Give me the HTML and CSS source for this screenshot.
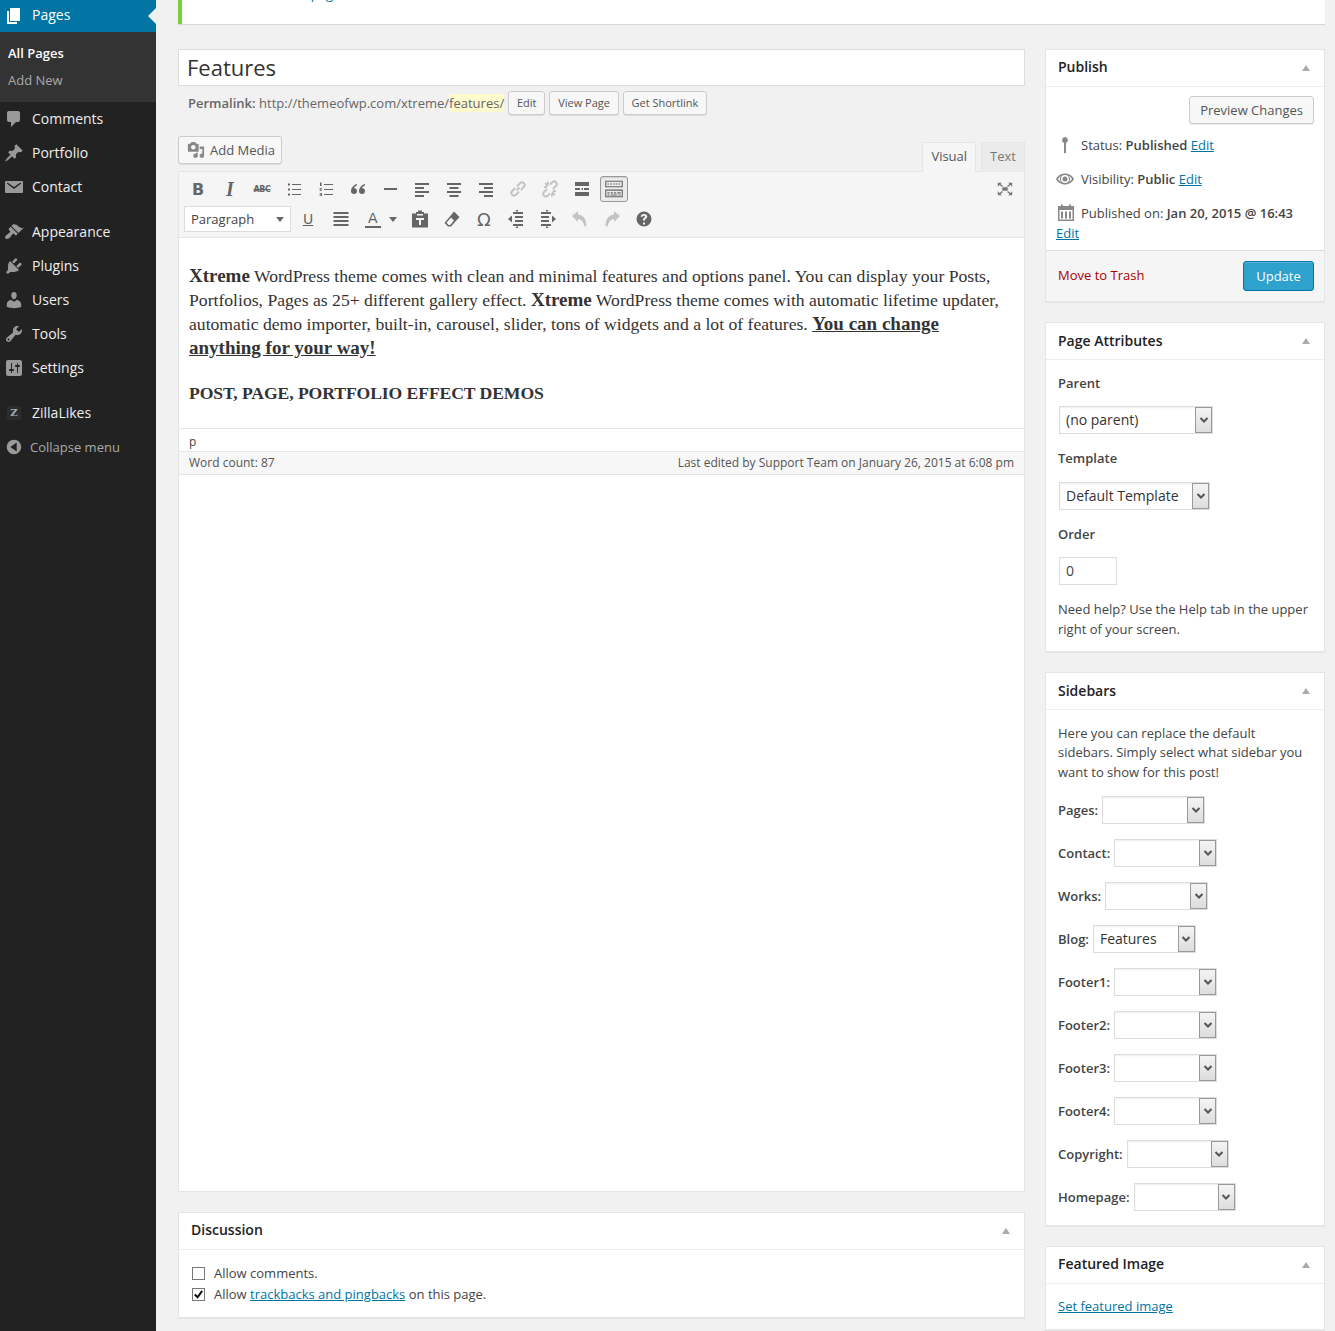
FILE: index.html
```html
<!DOCTYPE html>
<html lang="en">
<head>
<meta charset="utf-8">
<title>Edit Page</title>
<link rel="stylesheet" href="styles.css">
</head>
<body>
<svg class="defs" width="0" height="0" aria-hidden="true">
  <defs>
    <symbol id="i-page" viewBox="0 0 20 20"><path d="M6 15V2h10v13H6zm-1 1h8v2H3V5h2v11z"/></symbol>
    <symbol id="i-comment" viewBox="0 0 20 20"><path d="M5 2h9c1.1 0 2 .9 2 2v7c0 1.1-.9 2-2 2h-2l-5 5v-5H5c-1.1 0-2-.9-2-2V4c0-1.1.9-2 2-2z"/></symbol>
    <symbol id="i-pin" viewBox="0 0 20 20"><path d="M10.44 3.02l1.82-1.82 6.36 6.35-1.83 1.82c-1.05-.68-2.48-.57-3.41.36l-.75.75c-.92.93-1.04 2.35-.35 3.41l-1.83 1.82-2.41-2.41-2.8 2.79c-.42.42-3.38 2.71-3.8 2.29s1.86-3.39 2.28-3.81l2.79-2.79L4.1 9.36l1.83-1.82c1.05.69 2.48.57 3.4-.36l.75-.75c.93-.92 1.05-2.35.36-3.41z"/></symbol>
    <symbol id="i-mail" viewBox="0 0 20 20"><path fill-rule="evenodd" d="M2 4h16a1 1 0 0 1 1 1v10a1 1 0 0 1-1 1H2a1 1 0 0 1-1-1V5a1 1 0 0 1 1-1zM3.500 5.500L2.800 6.500 10 12l7.200-5.500-.7-1L10 10z"/></symbol>
    <symbol id="i-brush" viewBox="0 0 20 20"><path d="M14.48 11.06L7.41 3.99l1.5-1.5c.5-.56 2.3-.47 3.51.32 1.21.8 1.43 1.28 2.91 2.1 1.18.64 2.45 1.26 4.45.85zm-.71.71L6.7 4.7 4.93 6.47c-.39.39-.39 1.02 0 1.41l1.06 1.06c.39.39.39 1.03 0 1.42-.6.6-1.43 1.11-2.21 1.69-.35.26-.7.53-1.01.84C1.43 13.23.4 15.45 1.5 16.55c1.1 1.1 3.32.07 4.64-1.27.31-.31.58-.66.84-1.01.58-.78 1.09-1.61 1.69-2.21.39-.39 1.02-.39 1.42 0l1.06 1.06c.39.39 1.02.39 1.41 0z"/></symbol>
    <symbol id="i-plug" viewBox="0 0 20 20"><path d="M13.11 4.36L9.87 7.6 8 5.73l3.24-3.24c.35-.34 1.05-.2 1.56.32.52.51.66 1.21.31 1.55zm-8 1.77l.91-1.12 9.01 9.01-1.19.84c-.71.71-2.63 1.16-3.82 1.16H6.14L4.9 17.26c-.59.59-1.54.59-2.12 0-.59-.58-.59-1.53 0-2.12l1.24-1.24v-3.88c0-1.13.4-3.19 1.09-3.89zm7.26 3.97l3.24-3.24c.34-.35 1.04-.21 1.55.31.52.51.66 1.21.31 1.55l-3.24 3.25z"/></symbol>
    <symbol id="i-user" viewBox="0 0 20 20"><path d="M10 9.25c-2.27 0-2.73-3.44-2.73-3.44C7 4.02 7.82 2 9.97 2c2.16 0 2.98 2.02 2.71 3.81 0 0-.41 3.44-2.68 3.44zm0 2.57L12.72 10c2.39 0 4.52 2.33 4.52 4.53v2.49s-3.65 1.13-7.24 1.13c-3.65 0-7.24-1.13-7.24-1.13v-2.49c0-2.25 1.94-4.48 4.47-4.48z"/></symbol>
    <symbol id="i-tool" viewBox="0 0 20 20"><path d="M16.68 9.77c-1.34 1.34-3.3 1.67-4.95.99l-5.41 6.52c-.99.99-2.59.99-3.58 0s-.99-2.59 0-3.57l6.52-5.42c-.68-1.65-.35-3.61.99-4.95 1.28-1.28 3.12-1.62 4.72-1.06l-2.89 2.89 2.82 2.82 2.86-2.87c.53 1.58.18 3.39-1.08 4.65zM3.81 16.21c.4.39 1.04.39 1.43 0 .4-.4.4-1.04 0-1.43-.39-.4-1.03-.4-1.43 0-.39.39-.39 1.03 0 1.43z"/></symbol>
    <symbol id="i-settings" viewBox="0 0 20 20"><path d="M18 16V4c0-1.1-.9-2-2-2H4c-1.1 0-2 .9-2 2v12c0 1.1.9 2 2 2h12c1.1 0 2-.9 2-2zM8 11h1c.55 0 1 .45 1 1s-.45 1-1 1H8v1.5c0 .28-.22.5-.5.5s-.5-.22-.5-.5V13H6c-.55 0-1-.45-1-1s.45-1 1-1h1V5.5c0-.28.22-.5.5-.5s.5.22.5.5V11zm5-2h-1c-.55 0-1-.45-1-1s.45-1 1-1h1V5.5c0-.28.22-.5.5-.5s.5.22.5.5V7h1c.55 0 1 .45 1 1s-.45 1-1 1h-1v5.5c0 .28-.22.5-.5.5s-.5-.22-.5-.5V9z"/></symbol>
    <symbol id="i-collapse" viewBox="0 0 20 20"><path d="M18 10c0 4.4-3.6 8-8 8s-8-3.6-8-8 3.6-8 8-8 8 3.6 8 8zm-5-5l-7 5 7 5V5z"/></symbol>
    <symbol id="i-media" viewBox="0 0 20 20"><path d="M13 11V4c0-.55-.45-1-1-1h-1.67L9 1H5L3.67 3H2c-.55 0-1 .45-1 1v7c0 .55.45 1 1 1h10c.55 0 1-.45 1-1zM7 4.5c1.38 0 2.5 1.12 2.5 2.5S8.38 9.5 7 9.5 4.5 8.38 4.5 7 5.62 4.5 7 4.5zM14 6h5v10.5c0 1.38-1.12 2.5-2.5 2.5S14 17.88 14 16.5s1.12-2.5 2.5-2.5c.17 0 .34.02.5.05V9h-3V6zm-4 8.05V13h2v3.5c0 1.38-1.12 2.5-2.5 2.5S7 17.88 7 16.5 8.12 14 9.5 14c.17 0 .34.02.5.05z"/></symbol>
    <symbol id="i-chev" viewBox="0 0 10 10"><path d="M1.5 3 L5 6.5 L8.5 3" fill="none" stroke="currentColor" stroke-width="2"/></symbol>
  </defs>
</svg>
<div class="shell">
  <nav class="sidebar">
    <a class="menu-item current"><svg class="menu-icon"><use href="#i-page"/></svg><span>Pages</span></a>
    <div class="submenu">
      <a class="sub-item sub-on">All Pages</a>
      <a class="sub-item">Add New</a>
    </div>
    <a class="menu-item"><svg class="menu-icon"><use href="#i-comment"/></svg><span>Comments</span></a>
    <a class="menu-item"><svg class="menu-icon"><use href="#i-pin"/></svg><span>Portfolio</span></a>
    <a class="menu-item"><svg class="menu-icon"><use href="#i-mail"/></svg><span>Contact</span></a>
    <div class="menu-sep"></div>
    <a class="menu-item"><svg class="menu-icon"><use href="#i-brush"/></svg><span>Appearance</span></a>
    <a class="menu-item"><svg class="menu-icon"><use href="#i-plug"/></svg><span>Plugins</span></a>
    <a class="menu-item"><svg class="menu-icon"><use href="#i-user"/></svg><span>Users</span></a>
    <a class="menu-item"><svg class="menu-icon"><use href="#i-tool"/></svg><span>Tools</span></a>
    <a class="menu-item"><svg class="menu-icon"><use href="#i-settings"/></svg><span>Settings</span></a>
    <div class="menu-sep"></div>
    <a class="menu-item"><span class="zilla">Z</span><span>ZillaLikes</span></a>
    <a class="menu-item collapse"><svg class="collapse-icon"><use href="#i-collapse"/></svg><span>Collapse menu</span></a>
  </nav>

  <main class="content">
    <div class="notice"><p class="notice-text"><a class="link-plain">View page</a></p></div>
    <div class="columns">
      <section class="col-main">
        <div class="title-box">Features</div>
        <div class="permalink">
          <strong class="perm-label">Permalink:</strong>
          <span>http://themeofwp.com/xtreme/<mark class="slug">features/</mark></span>
          <button class="mini-btn">Edit</button>
          <button class="mini-btn">View Page</button>
          <button class="mini-btn">Get Shortlink</button>
        </div>

        <div class="media-row">
          <button class="media-btn"><svg class="media-icon"><use href="#i-media"/></svg>Add Media</button>
          <div class="tabs">
            <span class="tab tab-on">Visual</span>
            <span class="tab">Text</span>
          </div>
        </div>

        <div class="editor">
          <div class="toolbar">
            <div class="tb-row">
              <span class="tb t-b">B</span>
              <span class="tb t-i">I</span>
              <span class="tb t-abc">ABC</span>
              <span class="tb"><svg class="ic" viewBox="0 0 20 20"><path d="M4 4.500h2v2H4zM8 5h9v1H8zM4 9.500h2v2H4zM8 10h9v1H8zM4 14.500h2v2H4zM8 15h9v1H8z"/></svg></span>
              <span class="tb"><svg class="ic" viewBox="0 0 20 20"><path d="M8 5h9v1H8zM8 10h9v1H8zM8 15h9v1H8zM4 3.500h1.500v3.500H4zM3.500 9h2.500v.8L4.500 11H6v.8H3.500V11L5 9.800H3.500zM3.500 14H6v3H3.500v-.8H5v-.4H4v-.6h1v-.4H3.500z"/></svg></span>
              <span class="tb"><svg class="ic" viewBox="0 0 20 20"><path d="M9 5c-3 .8-5.500 3-6 6.500-.3 2 1 3.500 3 3.500s3-1.300 3-3-1.200-2.800-3-3c.3-1 1.500-2 3-2.500zM17 5c-3 .8-5.500 3-6 6.500-.3 2 1 3.500 3 3.500s3-1.300 3-3-1.200-2.800-3-3c.3-1 1.500-2 3-2.500z"/></svg></span>
              <span class="tb"><svg class="ic" viewBox="0 0 20 20"><path d="M4 9h13v2H4z"/></svg></span>
              <span class="tb"><svg class="ic" viewBox="0 0 20 20"><path d="M3 4h14v2H3zM3 8h9v2H3zM3 12h14v2H3zM3 16h9v2H3z"/></svg></span>
              <span class="tb"><svg class="ic" viewBox="0 0 20 20"><path d="M3 4h14v2H3zM5.500 8h9v2h-9zM3 12h14v2H3zM5.500 16h9v2h-9z"/></svg></span>
              <span class="tb"><svg class="ic" viewBox="0 0 20 20"><path d="M3 4h14v2H3zM8 8h9v2H8zM3 12h14v2H3zM8 16h9v2H8z"/></svg></span>
              <span class="tb off"><svg class="ic" viewBox="0 0 20 20"><path d="M8.500 11.500l3-3M7.200 9L4 12.200a2.700 2.700 0 0 0 3.800 3.800l3.200-3.200M9 7.200L12.200 4a2.700 2.700 0 0 1 3.800 3.800L12.800 11" fill="none" stroke="currentColor" stroke-width="2"/></svg></span>
              <span class="tb off"><svg class="ic" viewBox="0 0 20 20"><path d="M7.200 10L4 13a2.600 2.600 0 0 0 3.700 3.700l2.300-2.300M12.800 10L16 7a2.600 2.600 0 0 0-3.700-3.700L10 5.600M5 4l3 3M15 16l-3-3M4 8h3M13 12h3M8 2.500v3M12 14.500v3" fill="none" stroke="currentColor" stroke-width="2"/></svg></span>
              <span class="tb"><svg class="ic" viewBox="0 0 20 20"><path d="M3 3h14v4H3zM3 9h5v2H3zM9.500 9h1.500v2H9.500zM12 9h5v2h-5zM3 13h14v4H3z"/></svg></span>
              <span class="tb tb-active"><svg class="ic-wide" viewBox="0 0 20 20"><path d="M2 2.500h16v6H2zM3 3.500v4h14v-4zM4 5h1.500v1H4zM6.500 5H8v1H6.500zM9 5h1.500v1H9zM11.500 5H13v1h-1.500zM14 5h1.500v1H14zM2 10.500h16v7H2zM3 11.500v5h14v-5zM4 13h2v1H4zM7 13h2v1H7zM10 13h2v1h-2zM13 13h3v1h-3zM4 15h2v1H4zM7 15h6v1H7zM14 15h2v1h-2z" fill-rule="evenodd"/></svg></span>
              <span class="tb tb-end"><svg class="ic" viewBox="0 0 20 20"><path d="M7 8h6v4H7zM2 3h4.500L5 4.500l2.700 2.200-1 1.100L4 5.500 2 7.500zM18 3v4.500l-2-2-2.700 2.300-1-1.100L15 4.500 13.500 3zM2 17v-4.500l2 2 2.700-2.300 1 1.100L5 15.500 6.500 17zM18 17h-4.500l1.500-1.500-2.700-2.200 1-1.100 2.700 2.300 2-2z"/></svg></span>
            </div>
            <div class="tb-row tb-row2">
              <div class="format"><span>Paragraph</span><i class="caret"></i></div>
              <span class="tb t-u">U</span>
              <span class="tb tb-just"><svg class="ic" viewBox="0 0 20 20"><path d="M2.500 3h15v2h-15zM2.500 7h15v2h-15zM2.500 11h15v2h-15zM2.500 15h15v2h-15z"/></svg></span>
              <span class="tb tb-color"><span class="t-a">A</span><i class="caret caret-a"></i></span>
              <span class="tb"><svg class="ic" viewBox="0 0 20 20"><path d="M2 4.500h4V3h2V1.500h4V3h2v1.500h4V18.500H2zM7 5v1.500h6V5zM6 9v2h3v5h2v-5h3V9z" fill-rule="evenodd"/></svg></span>
              <span class="tb"><svg class="ic" viewBox="0 0 20 20"><path d="M12 2.500l5.500 5.500-8.500 9.500H6L2.500 14zM4.500 13.800l2.200 2.200h1.600L12 11.500l-3-3z" fill-rule="evenodd"/></svg></span>
              <span class="tb t-om">Ω</span>
              <span class="tb"><svg class="ic" viewBox="0 0 20 20"><path d="M7 3h10v2H7zM9 7h8v2H9zM9 11h8v2H9zM7 15h10v2H7zM10 17.500h2V19h-2zM10 1h2v1.500h-2zM2 10l4-3.500v7z"/></svg></span>
              <span class="tb"><svg class="ic" viewBox="0 0 20 20"><path d="M3 3h10v2H3zM3 7h8v2H3zM3 11h8v2H3zM3 15h10v2H3zM8 17.500h2V19H8zM8 1h2v1.500H8zM18 10l-4-3.500v7z"/></svg></span>
              <span class="tb off"><svg class="ic" viewBox="0 0 20 20"><path d="M2 7l6-5v3.500c5 .5 8.500 4 8.500 12l-2.500-.5c-.5-4-2-6.500-6-7V13z"/></svg></span>
              <span class="tb off"><svg class="ic" viewBox="0 0 20 20"><path d="M18 7l-6-5v3.500c-5 .5-8.500 4-8.500 12l2.500-.5c.5-4 2-6.500 6-7V13z"/></svg></span>
              <span class="tb"><svg class="ic" viewBox="0 0 20 20"><path fill-rule="evenodd" d="M10 2.500a7.500 7.500 0 1 1 0 15 7.500 7.500 0 0 1 0-15zM9 13.500v2h2v-2zM10 5c-2 0-3.200 1-3.300 2.800h2c.1-.8.500-1.100 1.200-1.100.7 0 1.100.3 1.100.9 0 .5-.3.800-.9 1.200-.9.600-1.100 1.100-1.100 2.200v.5h2v-.3c0-.6.200-.9.900-1.400.9-.6 1.300-1.200 1.300-2.200C13.200 5.900 12 5 10 5z"/></svg></span>
            </div>
          </div>
          <div class="editor-body">
            <p class="ed-p"><b class="ed-b">Xtreme</b> WordPress theme comes with clean and minimal features and options panel. You can display your Posts,<br>Portfolios, Pages as 25+ different gallery effect. <b class="ed-b">Xtreme</b> WordPress theme comes with automatic lifetime updater,<br>automatic demo importer, built-in, carousel, slider, tons of widgets and a lot of features. <b class="ed-b ed-u">You can change<br>anything for your way!</b></p>
            <p class="ed-h">POST, PAGE, PORTFOLIO EFFECT DEMOS</p>
          </div>
          <div class="pathbar">p</div>
          <div class="statusbar"><span>Word count: 87</span><span>Last edited by Support Team on January 26, 2015 at 6:08 pm</span></div>
          <div class="editor-rest"></div>
        </div>

        <div class="box discussion">
          <div class="box-head"><h3>Discussion</h3><i class="toggle"></i></div>
          <div class="disc-body">
            <div class="check-row"><span class="check"></span><span>Allow comments.</span></div>
            <div class="check-row"><span class="check"><svg class="tick" viewBox="0 0 12 12"><path d="M2 6l3 3 5-7" fill="none" stroke="#111" stroke-width="2.200"/></svg></span><span>Allow <a class="link">trackbacks and pingbacks</a> on this page.</span></div>
          </div>
        </div>
      </section>

      <aside class="col-side">
        <div class="box">
          <div class="box-head"><h3>Publish</h3><i class="toggle"></i></div>
          <div class="pub-top"><button class="btn">Preview Changes</button></div>
          <div class="pub-row pub-first"><svg class="pub-icon" viewBox="0 0 20 20"><path d="M10 2a3 3 0 0 1 1 5.800V18H9V7.800A3 3 0 0 1 10 2z"/></svg><span>Status: <b>Published</b> <a class="link">Edit</a></span></div>
          <div class="pub-row"><svg class="pub-icon" viewBox="0 0 20 20"><path fill-rule="evenodd" d="M10 4.500c4 0 7.300 2.300 9 5.500-1.700 3.200-5 5.500-9 5.500S2.700 13.200 1 10c1.700-3.200 5-5.500 9-5.500zM10 6a4 4 0 1 0 0 8 4 4 0 0 0 0-8zM3 10c1 1.500 2 2.500 3.200 3.200A5 5 0 0 1 6.200 6.800C5 7.500 4 8.500 3 10zm14 0c-1-1.500-2-2.500-3.200-3.200a5 5 0 0 1 0 6.400C15 12.500 16 11.500 17 10zM10 7.500a2.500 2.500 0 1 1 0 5 2.500 2.500 0 0 1 0-5z"/></svg><span>Visibility: <b>Public</b> <a class="link">Edit</a></span></div>
          <div class="pub-date"><svg class="pub-icon" viewBox="0 0 20 20"><path fill-rule="evenodd" d="M5 1.500h2V3h6V1.500h2V3h3v15H2V3h3zM3.500 7v9.500h13V7zM5 8.500h2v7H5zM9 8.500h2v7H9zM13 8.500h2v7h-2z"/></svg><span class="pub-on">Published on: <b>Jan 20, 2015 @ 16:43</b></span><br><a class="link">Edit</a></div>
          <div class="pub-foot"><a class="trash">Move to Trash</a><button class="btn-primary">Update</button></div>
        </div>

        <div class="box">
          <div class="box-head head-low"><h3>Page Attributes</h3><i class="toggle"></i></div>
          <div class="attr-body">
            <p class="attr-label">Parent</p>
            <div class="sel w154"><span class="sel-val">(no parent)</span><span class="sel-arrow"><svg class="chev"><use href="#i-chev"/></svg></span></div>
            <p class="attr-label attr-gap">Template</p>
            <div class="sel w151"><span class="sel-val">Default Template</span><span class="sel-arrow"><svg class="chev"><use href="#i-chev"/></svg></span></div>
            <p class="attr-label">Order</p>
            <div class="order">0</div>
            <p class="attr-help">Need help? Use the Help tab in the upper right of your screen.</p>
          </div>
        </div>

        <div class="box">
          <div class="box-head head-low"><h3>Sidebars</h3><i class="toggle"></i></div>
          <div class="bars-body">
            <p class="bars-intro">Here you can replace the default sidebars. Simply select what sidebar you want to show for this post!</p>
            <div class="bar-row"><label class="bar-label">Pages:</label><div class="sel w103"><span class="sel-val"></span><span class="sel-arrow"><svg class="chev"><use href="#i-chev"/></svg></span></div></div>
            <div class="bar-row"><label class="bar-label">Contact:</label><div class="sel w103"><span class="sel-val"></span><span class="sel-arrow"><svg class="chev"><use href="#i-chev"/></svg></span></div></div>
            <div class="bar-row"><label class="bar-label">Works:</label><div class="sel w103"><span class="sel-val"></span><span class="sel-arrow"><svg class="chev"><use href="#i-chev"/></svg></span></div></div>
            <div class="bar-row"><label class="bar-label">Blog:</label><div class="sel w103"><span class="sel-val">Features</span><span class="sel-arrow"><svg class="chev"><use href="#i-chev"/></svg></span></div></div>
            <div class="bar-row"><label class="bar-label">Footer1:</label><div class="sel w103"><span class="sel-val"></span><span class="sel-arrow"><svg class="chev"><use href="#i-chev"/></svg></span></div></div>
            <div class="bar-row"><label class="bar-label">Footer2:</label><div class="sel w103"><span class="sel-val"></span><span class="sel-arrow"><svg class="chev"><use href="#i-chev"/></svg></span></div></div>
            <div class="bar-row"><label class="bar-label">Footer3:</label><div class="sel w103"><span class="sel-val"></span><span class="sel-arrow"><svg class="chev"><use href="#i-chev"/></svg></span></div></div>
            <div class="bar-row"><label class="bar-label">Footer4:</label><div class="sel w103"><span class="sel-val"></span><span class="sel-arrow"><svg class="chev"><use href="#i-chev"/></svg></span></div></div>
            <div class="bar-row"><label class="bar-label">Copyright:</label><div class="sel w102"><span class="sel-val"></span><span class="sel-arrow"><svg class="chev"><use href="#i-chev"/></svg></span></div></div>
            <div class="bar-row"><label class="bar-label">Homepage:</label><div class="sel w102"><span class="sel-val"></span><span class="sel-arrow"><svg class="chev"><use href="#i-chev"/></svg></span></div></div>
          </div>
        </div>

        <div class="box">
          <div class="box-head"><h3>Featured Image</h3><i class="toggle"></i></div>
          <div class="feat-body"><a class="link">Set featured image</a></div>
        </div>
      </aside>
    </div>
  </main>
</div>
</body>
</html>
```

FILE: styles.css
```css
* { box-sizing: border-box; }
html, body { margin: 0; height: 1331px; overflow: hidden; }
body { background: #f1f1f1; color: #444; font: 13px/19px "Open Sans", sans-serif; }
.defs { position: absolute; }
p { margin: 0; }
button { font-family: inherit; margin: 0; cursor: pointer; }
.link { color: #0074a2; text-decoration: underline; }

.shell { display: flex; height: 1331px; }

.sidebar { width: 156px; flex: none; background: #222; color: #eee; }
.menu-item { display: flex; align-items: center; height: 34px; font-size: 14px; color: #eee; }
.menu-item > span { margin-left: 11px; padding-bottom: 2px; }
.menu-icon { width: 20px; height: 20px; fill: #999; flex: none; margin-left: 4px; margin-right: -3px; }
.menu-item.current { height: 32px; background: #0074a2; color: #fff; position: relative; }
.menu-item.current > span { padding-bottom: 3px; }
.menu-item.current .menu-icon { fill: #fff; }
.menu-item.current::after { content: ""; position: absolute; right: 0; top: 8px; border: 8px solid transparent; border-right-color: #f1f1f1; border-left-width: 0; }
.submenu { background: #333; height: 70px; padding-top: 8px; }
.sub-item { display: block; height: 27px; line-height: 27px; padding-left: 8px; color: #a9a9a9; font-size: 13px; }
.sub-on { color: #fff; font-weight: 600; }
.menu-sep { height: 11px; }
.menu-item .zilla { flex: none; width: 14px; height: 14px; margin: 0 3px 0 7px; padding: 0; background: #2c2c2c; color: #aaa; font: bold 10px/14px "DejaVu Serif", serif; text-align: center; }
.menu-item .zilla + span { margin-left: 8px; }
.collapse { color: #aaa; font-size: 13px; }
.menu-item.collapse > span { margin-left: 8px; padding-bottom: 0; }
.collapse-icon { width: 18px; height: 18px; margin-left: 5px; margin-right: -1px; fill: #999; }

.content { width: 1179px; padding: 0 10px 0 22px; }
.notice { height: 24px; background: #fff; border-left: 4px solid #7ad03a; box-shadow: 0 1px 1px rgba(0,0,0,.1); overflow: hidden; padding-left: 97px; }
.notice-text { margin-top: -14px; line-height: 16px; }
.link-plain { color: #0074a2; }
.columns { display: grid; grid-template-columns: 847px 280px; column-gap: 20px; margin-top: 25px; }

.title-box { height: 37px; background: #fff; border: 1px solid #ddd; padding-left: 8px; font-size: 22px; line-height: 34px; color: #333; }
.permalink { display: flex; align-items: center; height: 24px; margin-top: 5px; padding-left: 10px; color: #666; white-space: pre; }
.perm-label { font-weight: 600; margin-right: 3.5px; }
.slug { background: #fffbcc; color: inherit; }
.mini-btn { height: 24px; padding: 0 7.8px; margin-left: 4px; background: #f7f7f7; border: 1px solid #ccc; border-radius: 3px; box-shadow: 0 1px 0 rgba(0,0,0,.08); color: #555; font-size: 11px; line-height: 22px; }

.media-row { display: flex; justify-content: space-between; height: 35px; margin-top: 21px; }
.media-btn { display: flex; align-items: center; height: 28px; padding: 0 6px 0 8px; background: #f7f7f7; border: 1px solid #ccc; border-radius: 3px; box-shadow: 0 1px 0 rgba(0,0,0,.08); color: #555; font-size: 13px; }
.media-icon { width: 18px; height: 18px; margin-right: 5px; fill: #888; }
.tabs { display: flex; align-items: flex-end; gap: 5px; height: 30px; position: relative; z-index: 1; align-self: flex-end; margin-bottom: -1px; }
.tab { height: 30px; padding: 0 8px; background: #ebebeb; border: 1px solid #e5e5e5; border-bottom: 0; font-size: 13px; line-height: 27px; color: #777; }
.tab-on { background: #f5f5f5; color: #555; }

.editor { height: 1021px; background: #fff; border: 1px solid #e5e5e5; display: flex; flex-direction: column; }
.toolbar { height: 66px; background: #f5f5f5; border-bottom: 1px solid #e5e5e5; padding: 4px 0 0 5px; flex: none; }
.tb-row { display: flex; gap: 4px; height: 26px; }
.tb-row2 { margin-top: 4px; }
.tb { flex: none; display: flex; align-items: center; justify-content: center; width: 28px; height: 26px; color: #666; fill: #666; }
.tb.off { color: #c4c4c4; fill: #c4c4c4; }
.ic { width: 20px; height: 20px; fill: inherit; }
.ic-wide { width: 22px; height: 22px; fill: #666; }
.tb-active { background: #ebebeb; border: 1px solid #999; border-radius: 3px; box-shadow: inset 0 1px 1px rgba(0,0,0,.1); }
.tb-end { margin-left: auto; margin-right: 5px; }
.tb-end .ic { width: 18px; height: 18px; fill: #777; }
.t-b { font: bold 16px "DejaVu Sans", sans-serif; }
.t-i { font: italic bold 20px "Liberation Serif", serif; }
.t-abc { font: bold 8px "DejaVu Sans", sans-serif; text-decoration: line-through; letter-spacing: -.4px; }
.t-u { font: 14px "DejaVu Sans", sans-serif; text-decoration: underline; margin-left: -1px; }
.tb-just { margin-left: 1px; }
.t-om { font: 18px "DejaVu Sans", sans-serif; }
.t-a { font: 14px "DejaVu Sans", sans-serif; border-bottom: 2px solid #666; padding: 0 3px; line-height: 15px; }
.tb-color { width: 43px; justify-content: flex-start; padding-left: 6px; gap: 8px; }
.format { flex: none; width: 107px; height: 26px; display: flex; align-items: center; justify-content: space-between; background: #fff; border: 1px solid #ddd; padding: 0 6px; font-size: 13px; color: #444; }
.caret { display: block; width: 0; height: 0; border: 4px solid transparent; border-top: 5px solid #666; border-bottom: 0; }
.caret-a { flex: none; }

.editor-body { height: 190px; flex: none; padding: 26px 10px 0; background: #fff; font-family: "Liberation Serif", serif; font-size: 17.65px; line-height: 24px; color: #333; white-space: nowrap; }
.ed-b { font-size: 19px; line-height: 1; }
.ed-u { text-decoration: underline; }
.ed-h { font-weight: 700; margin-top: 21px; letter-spacing: -.1px; }
.pathbar { flex: none; height: 23px; border-top: 1px solid #e5e5e5; padding-left: 10px; line-height: 26px; font-size: 12px; background: #fff; color: #444; }
.statusbar { flex: none; height: 24px; display: flex; justify-content: space-between; padding: 0 10px; background: #f7f7f7; border-top: 1px solid #e5e5e5; border-bottom: 1px solid #e5e5e5; font-size: 12px; line-height: 21px; color: #555; }
.editor-rest { flex: 1; background: #fff; }

.box { background: #fff; border: 1px solid #e5e5e5; box-shadow: 0 1px 1px rgba(0,0,0,.04); margin-bottom: 20px; }
.box-head { display: flex; justify-content: space-between; align-items: center; height: 37px; padding: 0 14px 3px 12px; border-bottom: 1px solid #eee; }
.head-low { padding-bottom: 1px; }
.box-head h3 { margin: 0; font-size: 14px; font-weight: 600; color: #222; }
.toggle { width: 0; height: 0; border: 4px solid transparent; border-top: 0; border-bottom: 6px solid #aaa; margin-top: 3px; }
.head-low .toggle { margin-top: 1px; }
.discussion { margin-top: 20px; height: 106px; }
.disc-body { padding: 13px 12px 0 13px; }
.check-row { display: flex; align-items: center; gap: 9px; height: 21px; }
.check { flex: none; width: 13px; height: 13px; border: 1px solid #777; display: flex; align-items: center; justify-content: center; }
.tick { width: 11px; height: 11px; }

.pub-top { display: flex; justify-content: flex-end; padding: 9px 10px 0; }
.btn { height: 28px; padding: 0 10px; background: #f7f7f7; border: 1px solid #ccc; border-radius: 3px; box-shadow: 0 1px 0 rgba(0,0,0,.08); color: #555; font-size: 13px; }
.pub-row { display: flex; align-items: center; height: 34px; padding-left: 9px; }
.pub-first { margin-top: 4px; }
.pub-row > span { margin-left: 6px; }
.pub-row b, .pub-date b { font-weight: 600; }
.pub-icon { width: 20px; height: 20px; fill: #888; flex: none; }
.pub-date { padding: 7px 10px 0; line-height: 20px; height: 54px; }
.pub-date .pub-icon { vertical-align: -5px; margin-right: 5px; }
.pub-foot { display: flex; justify-content: space-between; align-items: center; height: 51px; padding: 0 10px 0 12px; background: #f5f5f5; border-top: 1px solid #ddd; }
.trash { color: #a00; padding-bottom: 2px; }
.btn-primary { width: 71px; height: 30px; background: #2ea2cc; border: 1px solid #0074a2; border-radius: 3px; color: #fff; font-size: 13px; box-shadow: inset 0 1px 0 rgba(120,200,230,.5); }

.attr-body { padding: 13px 12px 0; height: 291px; }
.attr-label { font-weight: 600; line-height: 20px; margin-bottom: 13px; }
.attr-gap { margin-bottom: 14px; }
.attr-body .sel { margin: 0 0 14px 1px; }
.order { width: 58px; height: 28px; margin: 0 0 14px 1px; border: 1px solid #ddd; padding-left: 6px; font-size: 14px; line-height: 26px; }
.attr-help { line-height: 20px; }

.sel { display: flex; height: 28px; background: #fff; border: 1px solid #ddd; font-size: 14px; line-height: 26px; color: #333; flex: none; box-shadow: inset 0 1px 2px rgba(0,0,0,.07); }
.w154 { width: 154px; }
.w151 { width: 151px; }
.w103 { width: 103px; }
.w102 { width: 102px; }
.sel-val { flex: 1; padding-left: 6px; white-space: nowrap; overflow: hidden; }
.sel-arrow { width: 17px; flex: none; display: flex; align-items: center; justify-content: center; background: linear-gradient(#f4f4f4, #ddd); border: 1px solid #999; color: #555; }
.chev { width: 10px; height: 10px; }

.bars-body { padding: 13.7px 12px 0; height: 515px; }
.bars-intro { line-height: 19.5px; }
.bar-row { display: flex; align-items: center; gap: 4px; height: 28px; margin-top: 15px; }
.bars-intro + .bar-row { margin-top: 14px; }
.bar-label { font-weight: 600; padding-top: 1px; }

.feat-body { padding: 13px 12px 13px; }
```
